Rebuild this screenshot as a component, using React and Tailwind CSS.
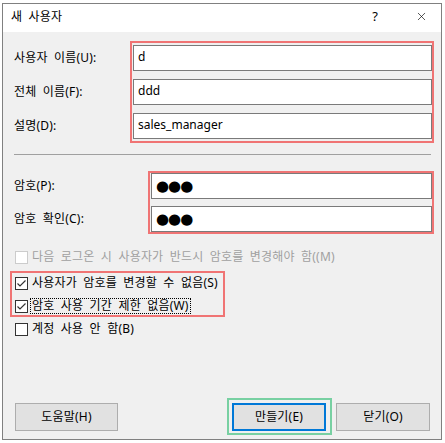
import { X } from 'lucide-react'

const font = "font-['Noto_Sans','Noto_Sans_CJK_KR',sans-serif] tracking-[0.2px] [word-spacing:3px]"

function Field({ value, dots }) {
  return (
    <div className="h-[26px] bg-white border border-[#7a7a7a] px-[4px] flex items-center">
      {dots ? (
        <span className="text-[15px] leading-[16px] text-black tracking-[-1px] font-['DejaVu_Sans',sans-serif]">●●●</span>
      ) : (
        <span className="text-[12px] leading-[16px] text-black tracking-normal -mt-[3px]">{value}</span>
      )}
    </div>
  )
}

function Check({ checked, disabled, label, focus }) {
  return (
    <div className="h-[18px] flex items-center">
      <div
        className={`w-[13px] h-[13px] border flex items-center justify-center ${
          disabled ? 'border-[#cccccc] bg-white' : 'border-[#333333] bg-white'
        }`}
      >
        {checked && (
          <svg width="11" height="11" viewBox="0 0 11 11">
            <polyline points="1.5,5.5 4,8 9.5,2.5" fill="none" stroke="#333" strokeWidth="1.2" />
          </svg>
        )}
      </div>
      <span
        className={`ml-[2px] px-px h-[16px] flex items-center text-[12px] ${
          disabled ? 'text-[#a0a0a0]' : 'text-black'
        } ${focus ? 'border border-dotted border-black' : 'border border-transparent'}`}
      >
        {label}
      </span>
    </div>
  )
}

export default function App() {
  return (
    <div className={`w-[445px] h-[443px] bg-white pt-[3px] pl-[2px] ${font}`}>
      <div className="w-[440px] h-[437px] border border-[#808080] bg-[#f0f0f0] flex flex-col">
        {/* title bar */}
        <div className="h-[28px] bg-white flex items-center pl-[8px] pb-[3px] text-[12px] text-black">
          <span>새 사용자</span>
          <span className="ml-auto text-[13px]">?</span>
          <X size={13} strokeWidth={1.2} className="ml-[37px] mr-[13px] text-black" />
        </div>

        {/* user info */}
        <div className="flex pl-[11px] pr-[7px] mt-[9px] text-[12px] text-black">
          <div className="w-[116px] pt-[4px] flex flex-col gap-[8px]">
            <div className="h-[26px] flex items-center">사용자 이름(U):</div>
            <div className="h-[26px] flex items-center">전체 이름(F):</div>
            <div className="h-[26px] flex items-center">설명(D):</div>
          </div>
          <div className="flex-1 border-2 border-[#f07474] pl-px py-[2px] flex flex-col gap-[8px]">
            <Field value="d" />
            <Field value="ddd" />
            <Field value="sales_manager" />
          </div>
        </div>

        <div className="h-px bg-[#a0a0a0] ml-[11px] mr-[10px] mt-[11px]" />

        {/* password */}
        <div className="flex pl-[11px] pr-[7px] mt-[16px] text-[12px] text-black">
          <div className="w-[134px] pt-[2px] flex flex-col gap-[7px]">
            <div className="h-[26px] flex items-center">암호(P):</div>
            <div className="h-[26px] flex items-center">암호 확인(C):</div>
          </div>
          <div className="flex-1 border-2 border-[#f07474] pl-px flex flex-col gap-[7px]">
            <Field dots />
            <Field dots />
          </div>
        </div>

        {/* options */}
        <div className="pl-[7px] mt-[14px] flex flex-col items-start">
          <div className="pl-[5px]">
            <Check disabled label="다음 로그온 시 사용자가 반드시 암호를 변경해야 함((M)" />
          </div>
          <div className="mt-[5px] border-2 border-[#f07474] pl-[3px] pr-[3px] pt-px flex flex-col gap-[5px]">
            <Check checked label="사용자가 암호를 변경할 수 없음(S)" />
            <Check checked focus label="암호 사용 기간 제한 없음(W)" />
          </div>
          <div className="pl-[5px] mt-[3px]">
            <Check label="계정 사용 안 함(B)" />
          </div>
        </div>

        {/* buttons */}
        <div className="mt-auto pb-[4px] pl-[12px] pr-[11px] flex items-center text-[12px] text-black">
          <div className="w-[103px] h-[28px] bg-[#e1e1e1] border border-[#adadad] flex items-center justify-center">
            도움말(H)
          </div>
          <div className="ml-auto w-[105px] h-[37px] border-2 border-[#78d0a2] pl-[3px] flex items-center">
            <div className="w-[94px] h-[28px] bg-[#e1e1e1] border-2 border-[#0078d7] flex items-center justify-center">
              만들기(E)
            </div>
          </div>
          <div className="ml-[4px] w-[94px] h-[28px] bg-[#e1e1e1] border border-[#adadad] flex items-center justify-center">
            닫기(O)
          </div>
        </div>
      </div>
    </div>
  )
}
